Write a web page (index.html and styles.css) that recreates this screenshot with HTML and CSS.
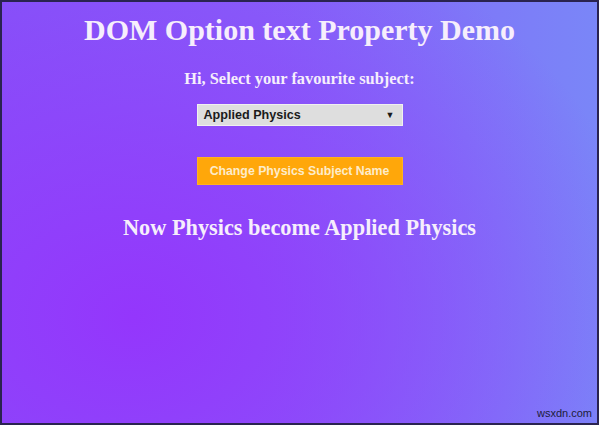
FILE: index.html
```html
<!DOCTYPE html>
<html>
<head>
<meta charset="utf-8">
<link rel="stylesheet" href="styles.css">
</head>
<body>
<div class="frame">
  <h1 class="title">DOM Option text Property Demo</h1>
  <p class="prompt">Hi, Select your favourite subject:</p>
  <div class="select"><span>Applied Physics</span><span class="arrow">▼</span></div>
  <button class="btn">Change Physics Subject Name</button>
  <p class="result">Now Physics become Applied Physics</p>
  <span class="mark">wsxdn.com</span>
</div>
</body>
</html>
```
FILE: styles.css
```css
html, body { margin: 0; padding: 0; background: #fff; }
.frame {
  position: relative;
  box-sizing: border-box;
  width: 599px;
  height: 425px;
  border: 2px solid #2a2350;
  background:
    radial-gradient(ellipse 520px 420px at 22% 75%, #9436fc 0%, rgba(148,54,252,0) 100%),
    linear-gradient(90deg, #8456f8 0%, #8463f8 45%, #7a86f8 100%);
  display: flex;
  flex-direction: column;
  align-items: center;
  font-family: "Liberation Serif", "Times New Roman", serif;
  color: #f6eefc;
}
.title {
  margin: 11px 0 0;
  font-size: 30px;
  line-height: 34px;
  font-weight: bold;
}
.prompt {
  margin: 23px 0 0;
  font-size: 16.4px;
  line-height: 18px;
  font-weight: bold;
}
.select {
  margin-top: 16px;
  box-sizing: border-box;
  width: 206px;
  height: 22px;
  background: #dedede;
  border: 1px solid #f0f0f0;
  display: flex;
  align-items: center;
  justify-content: space-between;
  padding: 0 7px 0 6px;
  font-family: "Liberation Sans", Arial, sans-serif;
  font-size: 12.6px;
  font-weight: bold;
  color: #1a1a1a;
}
.arrow { font-size: 9px; }
.btn {
  margin-top: 31px;
  box-sizing: border-box;
  width: 206px;
  height: 28px;
  background: #ffa70a;
  border: 1px solid #ffb21e;
  color: #fdeccb;
  font-family: "Liberation Sans", Arial, sans-serif;
  font-size: 12.3px;
  font-weight: bold;
  padding: 0;
}
.result {
  margin: 30px 0 0;
  font-size: 22.3px;
  line-height: 25px;
  font-weight: bold;
}
.mark {
  position: absolute;
  right: 5px;
  bottom: 4px;
  font-family: "Liberation Sans", Arial, sans-serif;
  font-size: 11px;
  color: #1c1c3a;
}
```
